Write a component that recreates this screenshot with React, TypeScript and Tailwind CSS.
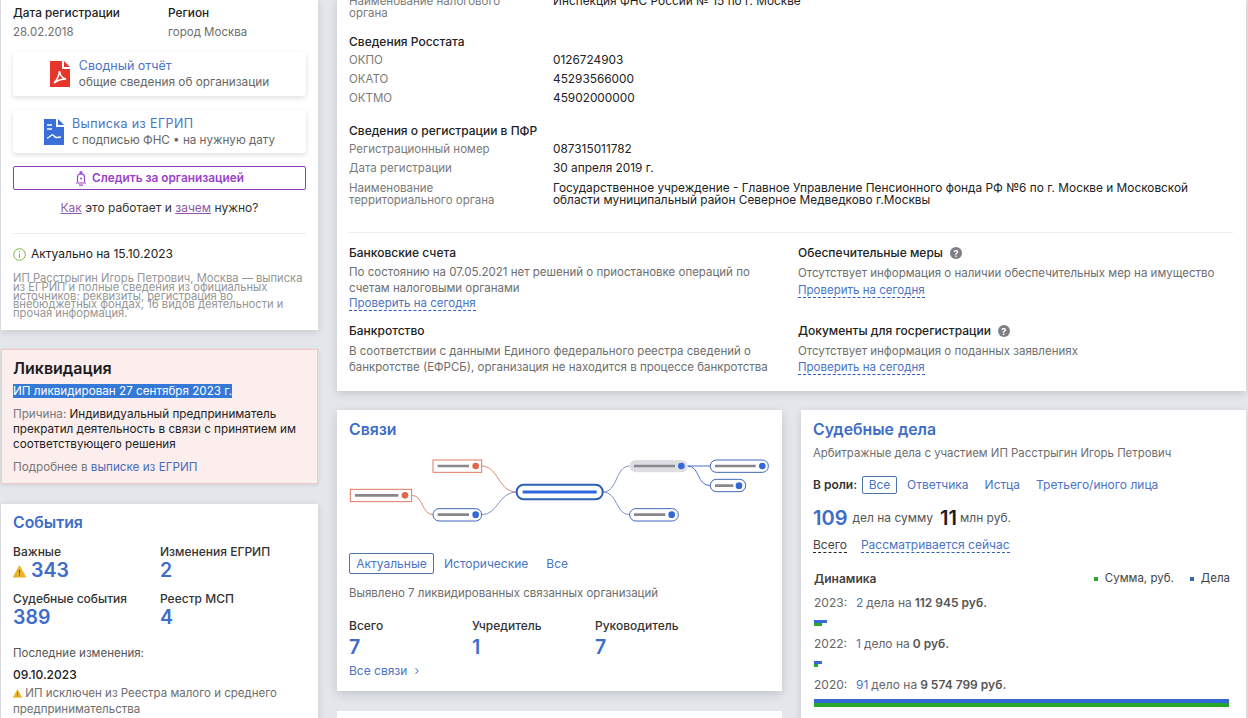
import React from 'react';
import { ChevronRight } from 'lucide-react';

const font = { fontFamily: 'Inter, "Noto Sans", sans-serif' };

function PdfIcon() {
  return (
    <svg width="20" height="26" viewBox="0 0 20 26" className="shrink-0">
      <path d="M0 0H12V8H20V26H0Z" fill="#e8352b" />
      <path d="M14 0L20 6H14Z" fill="#e8352b" />
      <path d="M4 22C7 19 9 15 9.5 10C10 14 12 17 16 18C12 18 8 19 4 22Z" fill="none" stroke="#fff" strokeWidth="1.6" />
    </svg>
  );
}

function DocIcon() {
  return (
    <svg width="20" height="26" viewBox="0 0 20 26" className="shrink-0">
      <path d="M0 0H12V8H20V26H0Z" fill="#3b6fd8" />
      <path d="M14 0L20 6H14Z" fill="#3b6fd8" />
      <path d="M3 6H8M3 10H8" stroke="#fff" strokeWidth="1.4" />
      <path d="M3 19C6 19 7 15 9 16C10.5 17 11 19 13 18.5C14.5 18.2 15.5 18 17 18" fill="none" stroke="#fff" strokeWidth="1.4" />
    </svg>
  );
}

function BellIcon() {
  return (
    <svg width="12" height="16" viewBox="0 0 12 16" fill="none" stroke="#9b3fc9" strokeWidth="1.2">
      <circle cx="6" cy="1.6" r="1" />
      <path d="M2.5 11V6C2.5 4 4 2.8 6 2.8S9.500 4 9.500 6V11" />
      <path d="M1 12H11M4 14.200H8" />
      <circle cx="6" cy="7.500" r="1" fill="#9b3fc9" stroke="none" />
    </svg>
  );
}

function Warn({ size }: { size: number }) {
  return (
    <svg width={size} height={size} viewBox="0 0 12 12" className="inline-block shrink-0">
      <path d="M6 1L11.500 11H0.500Z" fill="#eab32a" stroke="#eab32a" strokeLinejoin="round" />
      <path d="M6 4.500V7.500M6 8.700V9.800" stroke="#5a4a10" strokeWidth="1" />
    </svg>
  );
}

function Help() {
  return (
    <span className="inline-flex h-[12px] w-[12px] items-center justify-center rounded-full bg-[#7d7f85] text-[9px] font-bold leading-none text-white">?</span>
  );
}

function Row({ label, value, tall }: { label: React.ReactNode; value: React.ReactNode; tall?: boolean }) {
  return (
    <div className={`flex ${tall ? 'leading-[12px]' : 'h-[19px] items-center'}`}>
      <div className="w-[204px] shrink-0 text-[#7a7a7a]">{label}</div>
      <div className="text-[11.85px] text-[#222]">{value}</div>
    </div>
  );
}

function Check() {
  return <a className="border-b border-dashed border-[#2f5fb8] leading-[14px] text-[#4a74c4]">Проверить на сегодня</a>;
}

function Info({ title, help, children }: { title: string; help?: boolean; children: React.ReactNode }) {
  return (
    <div>
      <div className="flex h-[16px] items-center gap-[7px] text-[12px] font-medium text-[#222]">
        {title}
        {help && <Help />}
      </div>
      <div className="mt-[4px] leading-[16px] text-[#6e6e6e]">{children}</div>
    </div>
  );
}

function Stat({ label, value, warn, low }: { label: string; value: string; warn?: boolean; low?: boolean }) {
  return (
    <div>
      <div className="h-[16px] text-[12px] font-medium leading-[16px] text-[#333]">{label}</div>
      <div className={`flex h-[22px] items-center gap-[5px] text-[19.500px] font-semibold text-[#3d6cc9] ${low ? 'mt-[3px]' : ''}`}>
        {warn && <Warn size={13} />}
        {value}
      </div>
    </div>
  );
}

function LinksDiagram() {
  return (
    <svg viewBox="6 120 1320 240" className="block h-[80px] w-[440px]" fill="none">
      <g stroke="#e08a72" strokeWidth="3">
        <path d="M440 168C490 168 490 246 545 246" />
        <path d="M230 256C265 256 260 314 294 314" />
      </g>
      <g stroke="#7f93c4" strokeWidth="3">
        <path d="M440 314C490 314 490 246 545 246" />
        <path d="M803 246C850 246 840 168 884 168" />
        <path d="M803 246C850 246 840 314 884 314" />
      </g>
      <g stroke="#4b74c4" strokeWidth="3">
        <path d="M1058 168H1126" />
        <path d="M1058 168C1095 168 1085 227 1126 227" />
      </g>
      <rect x="294" y="150" width="146" height="37" fill="#fff" stroke="#e07a60" strokeWidth="3" />
      <rect x="46" y="238" width="184" height="37" fill="#fff" stroke="#e07a60" strokeWidth="3" />
      <rect x="294" y="296" width="146" height="37" rx="18" fill="#fff" stroke="#3f66b8" strokeWidth="3" />
      <rect x="884" y="150" width="174" height="37" rx="18" fill="#dedee2" />
      <rect x="884" y="296" width="146" height="37" rx="18" fill="#fff" stroke="#3f66b8" strokeWidth="3" />
      <rect x="1126" y="150" width="174" height="37" rx="18" fill="#fff" stroke="#3f66b8" strokeWidth="3" />
      <rect x="1126" y="208" width="106" height="37" rx="18" fill="#fff" stroke="#3f66b8" strokeWidth="3" />
      <rect x="545" y="224" width="258" height="44" rx="21" fill="#fff" stroke="#2f5fb8" strokeWidth="6" />
      <path d="M563 246H785" stroke="#2f66dc" strokeWidth="9" />
      <g stroke="#8a878c" strokeWidth="8">
        <path d="M308 168H402M60 256H190M308 314H402M897 168H1020M897 314H991M1140 168H1262M1140 227H1195" />
      </g>
      <g fill="#e0674c">
        <circle cx="422" cy="168" r="10" />
        <circle cx="210" cy="256" r="10" />
      </g>
      <g fill="#3468d6">
        <circle cx="422" cy="314" r="10" />
        <circle cx="1039" cy="168" r="10" />
        <circle cx="1010" cy="314" r="10" />
        <circle cx="1282" cy="168" r="10" />
        <circle cx="1212" cy="227" r="10" />
      </g>
    </svg>
  );
}

function Year({ year, n, rest, sum, blue, green }: { year: string; n: string; rest: string; sum: string; blue: string; green: string }) {
  return (
    <div>
      <div className="flex h-[16px] items-center text-[12px] leading-[16px] text-[#666]">
        <span className="w-[42px]">{year}:</span>
        <span className="text-[#4a74c4]">{n}</span>
        <span className="ml-[3px]">{rest}</span>
        <b className="ml-[3px] font-semibold text-[#555]">{sum}</b>
      </div>
      <div className={blue} />
      <div className={green} />
    </div>
  );
}

export default function App() {
  return (
    <div className="h-[718px] w-[1248px] overflow-hidden bg-[#e3e6ea] text-[11.500px]" style={font}>
      <div className="flex gap-[19px] pl-[1px]">
        {/* left column */}
        <div className="flex w-[317px] shrink-0 flex-col gap-[19px]">
          <div className="h-[330px] bg-white px-[12px] pt-[5px] shadow-[0_2px_8px_rgba(0,0,0,0.12)]">
            <div className="flex">
              <div className="w-[155px]">
                <div className="h-[16px] text-[11.800px] font-medium leading-[16px] text-[#222]">Дата регистрации</div>
                <div className="mt-[3px] h-[16px] leading-[16px] text-[#6e6e6e]">28.02.2018</div>
              </div>
              <div>
                <div className="h-[16px] text-[11.800px] font-medium leading-[16px] text-[#222]">Регион</div>
                <div className="mt-[3px] h-[16px] leading-[16px] text-[#6e6e6e]">город Москва</div>
              </div>
            </div>
            <div className="mt-[12px] flex h-[44px] w-[293px] items-center justify-center gap-[9px] rounded-[3px] bg-white shadow-[0_2px_5px_rgba(0,0,0,0.13)]">
              <PdfIcon />
              <div className="leading-[16px]">
                <div className="text-[12.500px] text-[#4a74c4]">Сводный отчёт</div>
                <div className="text-[11.800px] text-[#666]">общие сведения об организации</div>
              </div>
            </div>
            <div className="mt-[14px] flex h-[43px] w-[293px] items-center justify-center gap-[8px] rounded-[3px] bg-white shadow-[0_2px_5px_rgba(0,0,0,0.13)]">
              <DocIcon />
              <div className="leading-[16px]">
                <div className="text-[12.500px] tracking-[0.4px] text-[#4a74c4]">Выписка из ЕГРИП</div>
                <div className="text-[11.650px] text-[#666]">с подписью ФНС • на нужную дату</div>
              </div>
            </div>
            <div className="mt-[13px] flex h-[24px] w-[293px] items-center justify-center gap-[5px] rounded-[2px] border border-[#8e3bb8] pt-[1px] text-[11.800px] font-semibold text-[#9b3fc9]">
              <BellIcon />
              Следить за организацией
            </div>
            <div className="mt-[10px] h-[16px] text-center text-[12px] leading-[16px] text-[#333]">
              <a className="text-[#8e5aa8] underline">Как</a> это работает и <a className="text-[#8e5aa8] underline">зачем</a> нужно?
            </div>
            <div className="mt-[17px] h-px w-[293px] bg-[#ececec]" />
            <div className="mt-[12px] flex h-[16px] items-center gap-[5px] text-[12px] text-[#222]">
              <svg width="13" height="13" viewBox="0 0 13 13" fill="none" stroke="#7cb342" strokeWidth="1">
                <circle cx="6.500" cy="6.500" r="5.800" />
                <path d="M6.500 5.500V10M6.500 3V4.200" />
              </svg>
              Актуально на 15.10.2023
            </div>
            <div className="mt-[12px] w-[293px] text-[11.200px] leading-[8.8px] text-[#969696]">
              ИП Расстрыгин Игорь Петрович, Москва — выписка из ЕГРИП и полные сведения из официальных источников: реквизиты, регистрация во внебюджетных фондах, 16 видов деятельности и прочая информация.
            </div>
          </div>

          <div className="h-[135px] border border-[#f0c8c4] bg-[#fdeeee] px-[11px] pt-[8px] text-[11.700px] shadow-[0_1px_4px_rgba(0,0,0,0.1)]">
            <div className="h-[20px] text-[16px] font-semibold leading-[20px] text-[#1c1c22]">Ликвидация</div>
            <div className="mt-[6px] h-[15px] leading-[15px]">
              <span className="bg-[#3478d8] text-white">ИП ликвидирован 27 сентября 2023 г.</span>
            </div>
            <div className="mt-[8px] leading-[15px] text-[#222]">
              <span className="text-[#777]">Причина: </span>Индивидуальный предприниматель прекратил деятельность в связи с принятием им соответствующего решения
            </div>
            <div className="mt-[8px] leading-[15px] text-[#777]">
              Подробнее в <a className="text-[#4a6cb8]">выписке из ЕГРИП</a>
            </div>
          </div>

          <div className="mt-[1px] h-[230px] bg-white px-[12px] pt-[9px] shadow-[0_2px_8px_rgba(0,0,0,0.12)]">
            <div className="h-[20px] text-[15.800px] font-semibold leading-[20px] text-[#3d6cc9]">События</div>
            <div className="mt-[11px] grid grid-cols-[147px_1fr] gap-y-[9px]">
              <Stat label="Важные" value="343" warn />
              <Stat label="Изменения ЕГРИП" value="2" />
              <Stat label="Судебные события" value="389" />
              <Stat label="Реестр МСП" value="4" />
            </div>
            <div className="mt-[16px] h-[16px] leading-[16px] text-[#555]">Последние изменения:</div>
            <div className="mt-[6px] h-[16px] text-[12px] font-medium leading-[16px] text-[#222]">09.10.2023</div>
            <div className="mt-[2px] leading-[16px] text-[#6e6e6e]">
              <Warn size={9} /> ИП исключен из Реестра малого и среднего предпринимательства
            </div>
          </div>
        </div>

        {/* main column */}
        <div className="flex w-[909px] shrink-0 flex-col gap-[19px]">
          <div className="h-[391px] overflow-hidden bg-white px-[12px] shadow-[0_2px_8px_rgba(0,0,0,0.15)]">
            <div className="-mt-[5px]">
              <Row tall label={<>Наименование налогового<br />органа</>} value="Инспекция ФНС России № 15 по г. Москве" />
              <div className="mt-[15px] h-[16px] text-[12px] font-medium leading-[16px] text-[#222]">Сведения Росстата</div>
              <div className="mt-[1px]">
                <Row label="ОКПО" value="0126724903" />
                <Row label="ОКАТО" value="45293566000" />
                <Row label="ОКТМО" value="45902000000" />
              </div>
              <div className="mt-[15px] h-[16px] text-[12px] font-medium leading-[16px] text-[#222]">Сведения о регистрации в ПФР</div>
              <div className="mt-[1px]">
                <Row label="Регистрационный номер" value="087315011782" />
                <Row label="Дата регистрации" value="30 апреля 2019 г." />
              </div>
              <div className="mt-[4px]">
                <Row tall label={<>Наименование<br />территориального органа</>} value="Государственное учреждение - Главное Управление Пенсионного фонда РФ №6 по г. Москве и Московской области муниципальный район Северное Медведково г.Москвы" />
              </div>
              <div className="mt-[26px] h-px w-[884px] bg-[#ececec]" />
              <div className="mt-[12px] grid grid-cols-[449px_1fr]">
                <div className="flex flex-col gap-[12px]">
                  <div className="h-[66px] w-[430px]">
                    <Info title="Банковские счета">
                      <div className="leading-[15.500px]">
                        По состоянию на 07.05.2021 нет решений о приостановке операций по счетам налоговыми органами
                        <br />
                        <Check />
                      </div>
                    </Info>
                  </div>
                  <div className="w-[430px]">
                    <Info title="Банкротство">
                      В соответствии с данными Единого федерального реестра сведений о банкротстве (ЕФРСБ), организация не находится в процессе банкротства
                    </Info>
                  </div>
                </div>
                <div className="flex flex-col gap-[12px]">
                  <div className="h-[66px]">
                    <Info title="Обеспечительные меры" help>
                      Отсутствует информация о наличии обеспечительных мер на имущество
                      <div className="mt-[1px]">
                        <Check />
                      </div>
                    </Info>
                  </div>
                  <Info title="Документы для госрегистрации" help>
                    Отсутствует информация о поданных заявлениях
                    <br />
                    <Check />
                  </Info>
                </div>
              </div>
            </div>
          </div>

          <div className="flex gap-[19px]">
            <div className="flex w-[445px] flex-col gap-[20px]">
              <div className="h-[281px] bg-white pl-[12px] pt-[10px] shadow-[0_3px_10px_rgba(0,0,0,0.15)]">
                <div className="h-[20px] text-[15.800px] font-semibold leading-[20px] text-[#3d6cc9]">Связи</div>
                <div className="-ml-[12px] mt-[10px]">
                  <LinksDiagram />
                </div>
                <div className="mt-[23px] flex h-[21px] items-center gap-[10px] text-[12px] text-[#4a74c4]">
                  <span className="flex h-[21px] w-[85px] items-center justify-center rounded-[2px] border border-[#4a74a8]">Актуальные</span>
                  <span>Исторические</span>
                  <span className="ml-[8px]">Все</span>
                </div>
                <div className="mt-[11px] h-[16px] leading-[16px] text-[#6e6e6e]">Выявлено 7 ликвидированных связанных организаций</div>
                <div className="mt-[17px] flex">
                  <div className="w-[123px]"><Stat label="Всего" value="7" low /></div>
                  <div className="w-[123px]"><Stat label="Учредитель" value="1" low /></div>
                  <div><Stat label="Руководитель" value="7" low /></div>
                </div>
                <div className="mt-[4px] flex h-[16px] items-center gap-[5px] text-[12px] text-[#4a74c4]">
                  Все связи
                  <ChevronRight size={10} strokeWidth={2.500} />
                </div>
              </div>
              <div className="h-[40px] bg-white" />
            </div>

            <div className="h-[320px] w-[445px] bg-white px-[12px] pt-[10px] text-[12px] shadow-[0_2px_8px_rgba(0,0,0,0.12)]">
              <div className="h-[20px] text-[15.800px] font-semibold leading-[20px] text-[#3d6cc9]">Судебные дела</div>
              <div className="mt-[5px] h-[16px] text-[11.400px] leading-[16px] text-[#6e6e6e]">Арбитражные дела с участием ИП Расстрыгин Игорь Петрович</div>
              <div className="mt-[15px] flex h-[18px] items-center text-[#4a74c4]">
                <b className="w-[49px] font-semibold text-[#333]">В роли:</b>
                <span className="flex h-[18px] w-[35px] items-center justify-center rounded-[2px] border border-[#4a74a8]">Все</span>
                <span className="ml-[10px]">Ответчика</span>
                <span className="ml-[16px]">Истца</span>
                <span className="ml-[16px]">Третьего/иного лица</span>
              </div>
              <div className="mt-[14px] flex h-[20px] items-center text-[#555]">
                <span className="text-[20px] font-semibold text-[#3d6cc9]">109</span>
                <span className="ml-[5px]">дел на сумму</span>
                <span className="ml-[7px] text-[20px] font-semibold text-[#1c1c22]">11</span>
                <span className="ml-[3px]">млн руб.</span>
              </div>
              <div className="mt-[9px] flex h-[16px] items-center gap-[14px]">
                <span className="border-b border-dashed border-[#222] leading-[14px] text-[#444]">Всего</span>
                <span className="border-b border-dashed border-[#2f5fb8] leading-[14px] text-[#4a74c4]">Рассматривается сейчас</span>
              </div>
              <div className="mt-[18px] pl-[1px]">
                <div className="flex h-[16px] items-center justify-between pr-[4px] text-[#444]">
                  <b className="font-semibold">Динамика</b>
                  <div className="flex items-center text-[11.500px]">
                    <span className="mr-[7px] h-[4px] w-[4px] bg-[#27a82c]" />
                    Сумма, руб.
                    <span className="ml-[16px] mr-[7px] h-[4px] w-[4px] bg-[#3468a8]" />
                    Дела
                  </div>
                </div>
                <div className="mt-[8px] flex flex-col gap-[10px]">
                  <Year year="2023" n="2" rest="дела на" sum="112 945 руб." blue="mt-[9px] h-[3px] w-[13px] bg-[#3468d6]" green="h-[3px] w-[8px] bg-[#27a82c]" />
                  <Year year="2022" n="1" rest="дело на" sum="0 руб." blue="mt-[9px] h-[3px] w-[8px] bg-[#3468d6]" green="h-[3px] w-[4px] bg-[#27a82c]" />
                  <Year year="2020" n="91" rest="дело на" sum="9 574 799 руб." blue="mt-[6px] h-[4px] w-[415px] bg-[#3468d6]" green="h-[4px] w-[415px] bg-[#27a82c]" />
                </div>
              </div>
            </div>
          </div>
        </div>
      </div>
    </div>
  );
}
